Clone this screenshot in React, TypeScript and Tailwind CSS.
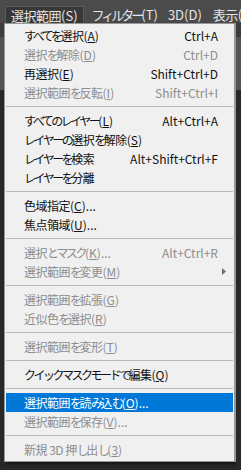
type Item = {
  label: string
  key?: string
  after?: string
  shortcut?: string
  disabled?: boolean
  active?: boolean
  submenu?: boolean
}

type Row = Item | "sep"

const rows: Row[] = [
  { label: "すべてを選択", key: "A", shortcut: "Ctrl+A" },
  { label: "選択を解除", key: "D", shortcut: "Ctrl+D", disabled: true },
  { label: "再選択", key: "E", shortcut: "Shift+Ctrl+D" },
  { label: "選択範囲を反転", key: "I", shortcut: "Shift+Ctrl+I", disabled: true },
  "sep",
  { label: "すべてのレイヤー", key: "L", shortcut: "Alt+Ctrl+A" },
  { label: "レイヤーの選択を解除", key: "S" },
  { label: "レイヤーを検索", shortcut: "Alt+Shift+Ctrl+F" },
  { label: "レイヤーを分離" },
  "sep",
  { label: "色域指定", key: "C", after: "..." },
  { label: "焦点領域", key: "U", after: "..." },
  "sep",
  { label: "選択とマスク", key: "K", after: "...", shortcut: "Alt+Ctrl+R", disabled: true },
  { label: "選択範囲を変更", key: "M", submenu: true, disabled: true },
  "sep",
  { label: "選択範囲を拡張", key: "G", disabled: true },
  { label: "近似色を選択", key: "R", disabled: true },
  "sep",
  { label: "選択範囲を変形", key: "T", disabled: true },
  "sep",
  { label: "クイックマスクモードで編集", key: "Q" },
  "sep",
  { label: "選択範囲を読み込む", key: "O", after: "...", active: true },
  { label: "選択範囲を保存", key: "V", after: "...", disabled: true },
  "sep",
  { label: "新規 3D 押し出し", key: "3", disabled: true },
]

// kana in the UI font are narrower than the kanji, so tighten them
const Jp = ({ text, kana = "tracking-[-2.5px]" }: { text: string; kana?: string }) => {
  const parts = text.split(/([\u3040-\u30ff]+)/)
  return (
    <>
      {parts.map((p, i) =>
        /[\u3040-\u30ff]/.test(p) ? (
          <span key={i} className={kana}>
            {p}
          </span>
        ) : (
          <span key={i} className="tracking-[-0.5px]">
            {p}
          </span>
        )
      )}
    </>
  )
}

const MenuRow = ({ item }: { item: Item }) => {
  const color = item.active ? "text-white" : item.disabled ? "text-[#8d8d8d]" : "text-[#111]"
  return (
    <div
      className={`${item.active ? "bg-[#0078d7]" : ""} ${color} h-[19px] flex flex-row items-center justify-between pl-[18px] pr-[15px] text-[12px] leading-[19px] whitespace-nowrap`}
    >
      <span>
        <Jp text={item.label} />
        {item.key && (
          <>
            (<u>{item.key}</u>)
          </>
        )}
        {item.after}
      </span>
      {item.shortcut && <span>{item.shortcut}</span>}
      {item.submenu && (
        <svg width="4" height="7" viewBox="0 0 4 7" className="mr-[-8px]">
          <path d="M0 0 L4 3.5 L0 7 Z" fill="#707070" />
        </svg>
      )}
    </div>
  )
}

export default function App() {
  return (
    <div
      className="w-[241px] h-[470px] overflow-hidden bg-[#282828] flex flex-col"
      style={{ fontFamily: '"Noto Sans CJK JP", "Noto Sans", sans-serif' }}
    >
      {/* menubar */}
      <div className="h-[23px] bg-[#4b4b4b] flex flex-row items-end text-[13px] text-[#e6e6e6] whitespace-nowrap overflow-hidden">
        <div className="ml-[5px] h-[17px] px-[5px] bg-[#383838] border border-b-0 border-[#5a5a5a] flex items-center leading-none">
          <Jp text="選択範囲" />
          (S)
        </div>
        <div className="ml-[8px] h-[17px] flex items-center leading-none">
          <Jp text="フィルター" kana="tracking-[-3px]" />
          (T)
        </div>
        <div className="ml-[10px] h-[17px] flex items-center leading-none">3D(D)</div>
        <div className="ml-[11px] h-[17px] flex items-center leading-none">
          <Jp text="表示" />(
        </div>
      </div>

      <div className="flex flex-row flex-1">
        {/* left strip of the document behind the menu */}
        <div className="w-[4px] flex flex-col">
          <div className="h-[14px] bg-[#3c3c3c]" />
          <div className="h-[53px] bg-[#535353]" />
          <div className="flex-1 bg-[#282828]" />
        </div>

        {/* dropdown menu */}
        <div className="w-[232px] h-[439px] bg-[#f0f0f0] border border-[#979797] border-r-2 shadow-[2px_2px_3px_rgba(0,0,0,0.55)] pt-[2px] px-[1px] flex flex-col">
          {rows.map((row, i) =>
            row === "sep" ? (
              <div key={i} className="h-[9px] flex items-center">
                <div className="w-full h-px bg-[#b9b9b9]" />
              </div>
            ) : (
              <MenuRow key={i} item={row} />
            )
          )}
        </div>

        {/* right strip */}
        <div className="flex-1 flex flex-col">
          <div className="h-[14px] bg-[#3c3c3c]" />
          <div className="h-[53px] bg-[#535353]" />
          <div className="flex-1 bg-[#282828]" />
        </div>
      </div>
    </div>
  )
}
